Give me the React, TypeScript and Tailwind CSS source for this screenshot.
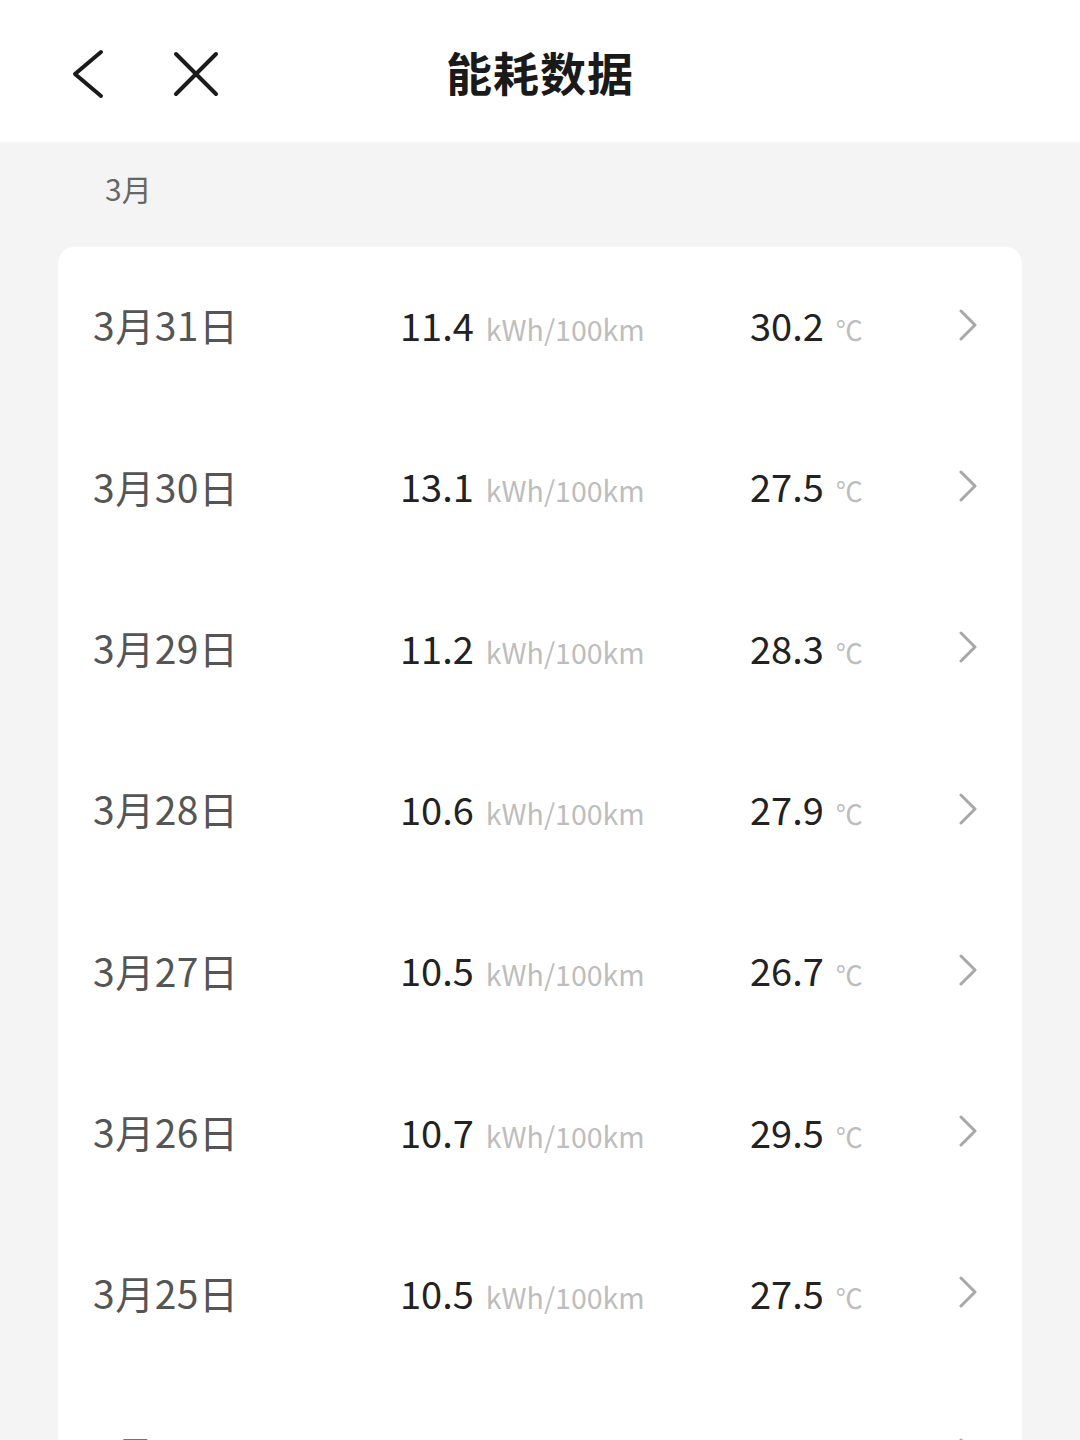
const rows = [
  { date: "3月31日", value: "11.4", temp: "30.2" },
  { date: "3月30日", value: "13.1", temp: "27.5" },
  { date: "3月29日", value: "11.2", temp: "28.3" },
  { date: "3月28日", value: "10.6", temp: "27.9" },
  { date: "3月27日", value: "10.5", temp: "26.7" },
  { date: "3月26日", value: "10.7", temp: "29.5" },
  { date: "3月25日", value: "10.5", temp: "27.5" },
  { date: "3月24日", value: "10.9", temp: "28.1" },
];

const font = { fontFamily: '"Noto Sans CJK SC", "Noto Sans", sans-serif' };

const App = () => {
  return (
    <div className="h-[1440px] overflow-hidden bg-[#f4f4f4]" style={font}>
      {/* Header */}
      <header className="relative h-[142px] bg-white flex items-center">
        <div className="flex items-center pl-[70px] pt-[6px] gap-[66px]">
          <svg width="36" height="50" viewBox="0 0 36 50" fill="none" stroke="#1a1a1a" strokeWidth="4" strokeLinecap="round" strokeLinejoin="round">
            <path d="M31 3 L5 25 L31 47" />
          </svg>
          <svg width="48" height="48" viewBox="0 0 48 48" fill="none" stroke="#1a1a1a" strokeWidth="4" strokeLinecap="round">
            <path d="M4 4 L44 44 M44 4 L4 44" />
          </svg>
        </div>
        <h1 className="absolute left-1/2 -translate-x-1/2 text-[46px] font-bold text-[#1a1a1a] tracking-[1px]">
          能耗数据
        </h1>
      </header>

      {/* Month label */}
      <div className="h-[105px] pl-[105px] pt-[24px] text-[30px] text-[#666]">3月</div>

      {/* List card */}
      <div className="mx-[58px] bg-white rounded-[16px]">
        {rows.map((row, index) => (
          <div key={index} className="h-[161.3px] flex items-center pl-[35px] pr-[44px] pb-[6px]">
            <div className="w-[307px] text-[39px] tracking-[0.5px] text-[#555]">{row.date}</div>
            <div className="w-[350px] flex items-baseline gap-[12px]">
              <span className="text-[38px] text-[#222]">{row.value}</span>
              <span className="text-[28.5px] text-[#bdbdbd]">kWh/100km</span>
            </div>
            <div className="flex-1 flex items-baseline gap-[12px]">
              <span className="text-[38px] text-[#222]">{row.temp}</span>
              <span className="text-[27px] text-[#bdbdbd]">℃</span>
            </div>
            <svg width="20" height="32" viewBox="0 0 20 32" fill="none" stroke="#a8a8a8" strokeWidth="3" strokeLinecap="round" strokeLinejoin="round">
              <path d="M3 2 L17 16 L3 30" />
            </svg>
          </div>
        ))}
      </div>
    </div>
  );
};

export default App;
